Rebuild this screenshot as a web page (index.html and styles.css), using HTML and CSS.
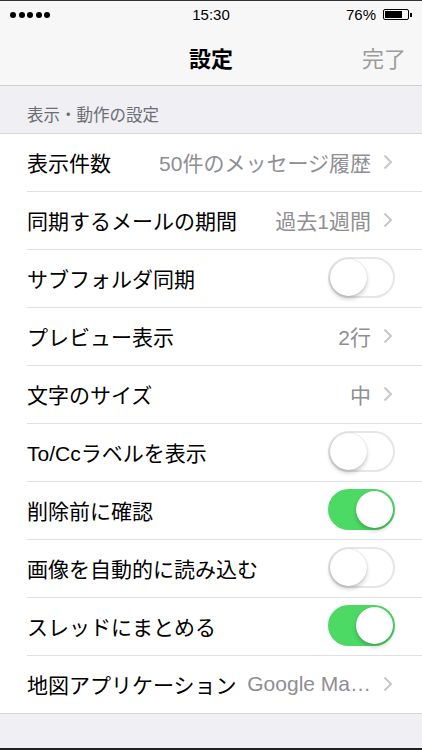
FILE: index.html
```html
<!DOCTYPE html>
<html lang="ja">
<head>
  <meta charset="UTF-8">
  <title>設定</title>
  <link rel="stylesheet" href="styles.css">
</head>
<body>

<div class="screen">
  <div class="statusbar">
    <div class="signal">
      <span></span><span></span><span></span><span></span><span></span>
    </div>
    <div class="time">15:30</div>
    <div class="battery-wrap">
      <span class="percent">76%</span>
      <span class="battery"><span class="level"></span></span>
      <span class="tip"></span>
    </div>
  </div>

  <div class="navbar">
    <h1>設定</h1>
    <span class="done">完了</span>
  </div>

  <div class="section-header">表示・動作の設定</div>

  <ul class="list">
    <li class="row">
      <span class="label">表示件数</span>
      <span class="value">50件のメッセージ履歴</span>
      <svg class="chevron" width="10" height="16" viewBox="0 0 10 16"><path d="M1.5 1.5 L8 8 L1.5 14.5" fill="none" stroke="#c7c7cc" stroke-width="2"/></svg>
    </li>
    <li class="row">
      <span class="label">同期するメールの期間</span>
      <span class="value">過去1週間</span>
      <svg class="chevron" width="10" height="16" viewBox="0 0 10 16"><path d="M1.5 1.5 L8 8 L1.5 14.5" fill="none" stroke="#c7c7cc" stroke-width="2"/></svg>
    </li>
    <li class="row">
      <span class="label">サブフォルダ同期</span>
      <span class="switch"><span class="knob"></span></span>
    </li>
    <li class="row">
      <span class="label">プレビュー表示</span>
      <span class="value">2行</span>
      <svg class="chevron" width="10" height="16" viewBox="0 0 10 16"><path d="M1.5 1.5 L8 8 L1.5 14.5" fill="none" stroke="#c7c7cc" stroke-width="2"/></svg>
    </li>
    <li class="row">
      <span class="label">文字のサイズ</span>
      <span class="value">中</span>
      <svg class="chevron" width="10" height="16" viewBox="0 0 10 16"><path d="M1.5 1.5 L8 8 L1.5 14.5" fill="none" stroke="#c7c7cc" stroke-width="2"/></svg>
    </li>
    <li class="row">
      <span class="label">To/Ccラベルを表示</span>
      <span class="switch"><span class="knob"></span></span>
    </li>
    <li class="row">
      <span class="label">削除前に確認</span>
      <span class="switch on"><span class="knob"></span></span>
    </li>
    <li class="row">
      <span class="label">画像を自動的に読み込む</span>
      <span class="switch"><span class="knob"></span></span>
    </li>
    <li class="row">
      <span class="label">スレッドにまとめる</span>
      <span class="switch on"><span class="knob"></span></span>
    </li>
    <li class="row last">
      <span class="label">地図アプリケーション</span>
      <span class="value">Google Ma…</span>
      <svg class="chevron" width="10" height="16" viewBox="0 0 10 16"><path d="M1.5 1.5 L8 8 L1.5 14.5" fill="none" stroke="#c7c7cc" stroke-width="2"/></svg>
    </li>
  </ul>

  <div class="bottom"></div>
</div>

</body>
</html>
```

FILE: styles.css
```css
* {
  box-sizing: border-box;
}

html, body {
  margin: 0;
  padding: 0;
}

body {
  font-family: "Liberation Sans", "Noto Sans CJK JP", sans-serif;
  background: #efeff4;
  color: #000;
}

.screen {
  width: 422px;
  height: 750px;
  display: flex;
  flex-direction: column;
  border-top: 1px solid #333;
  border-bottom: 2px solid #222;
  background: #efeff4;
}

/* status bar */
.statusbar {
  height: 27px;
  background: #f7f7f7;
  display: flex;
  align-items: center;
  justify-content: space-between;
  padding: 0 10px;
  position: relative;
  font-size: 15px;
}

.signal {
  display: flex;
  gap: 2.5px;
}

.signal span {
  width: 6px;
  height: 6px;
  border-radius: 50%;
  background: #000;
}

.time {
  position: absolute;
  left: 0;
  right: 0;
  text-align: center;
  font-weight: 500;
}

.battery-wrap {
  display: flex;
  align-items: center;
}

.percent {
  margin-right: 7px;
}

.battery {
  width: 26px;
  height: 11px;
  border: 1px solid #000;
  border-radius: 2px;
  padding: 1px;
  display: flex;
}

.battery .level {
  width: 76%;
  background: #000;
}

.tip {
  width: 2px;
  height: 4px;
  background: #000;
  margin-left: 1px;
}

/* nav bar */
.navbar {
  height: 58px;
  background: #f7f7f7;
  border-bottom: 1px solid #cfcfcf;
  display: flex;
  align-items: center;
  justify-content: center;
  position: relative;
}

.navbar h1 {
  margin: 0;
  font-size: 22px;
  font-weight: bold;
}

.done {
  position: absolute;
  right: 16px;
  font-size: 22px;
  color: #9b9b9b;
}

/* section header */
.section-header {
  height: 48px;
  padding: 16px 27px 0;
  font-size: 16.5px;
  color: #6d6d72;
  border-bottom: 1px solid #d6d6d9;
}

.list {
  list-style: none;
  margin: 0;
  padding: 0 0 0 27px;
  background: #fff;
  border-bottom: 1px solid #d6d6d9;
}

.row {
  height: 58px;
  display: flex;
  align-items: center;
  padding-right: 27px;
  padding-bottom: 2px;
  border-bottom: 1px solid #e0e0e3;
  font-size: 21px;
}

.row.last {
  border-bottom: none;
  height: 57px;
}

.label {
  flex: 1;
  white-space: nowrap;
}

.value {
  color: #8e8e93;
  white-space: nowrap;
  margin-left: 8px;
}

.chevron {
  margin-left: 12px;
  margin-right: 2px;
}

/* switches */
.switch {
  width: 67px;
  height: 41px;
  border-radius: 21px;
  border: 2px solid #e5e5ea;
  background: #fff;
  position: relative;
}

.knob {
  position: absolute;
  top: 0;
  left: 0;
  width: 37px;
  height: 37px;
  border-radius: 50%;
  background: #fff;
  box-shadow: 0 3px 4px rgba(0,0,0,0.2), 0 0 1px rgba(0,0,0,0.25);
}

.switch.on {
  background: #4cd964;
  border-color: #4cd964;
}

.switch.on .knob {
  left: 26px;
}

.bottom {
  flex: 1;
}
```
